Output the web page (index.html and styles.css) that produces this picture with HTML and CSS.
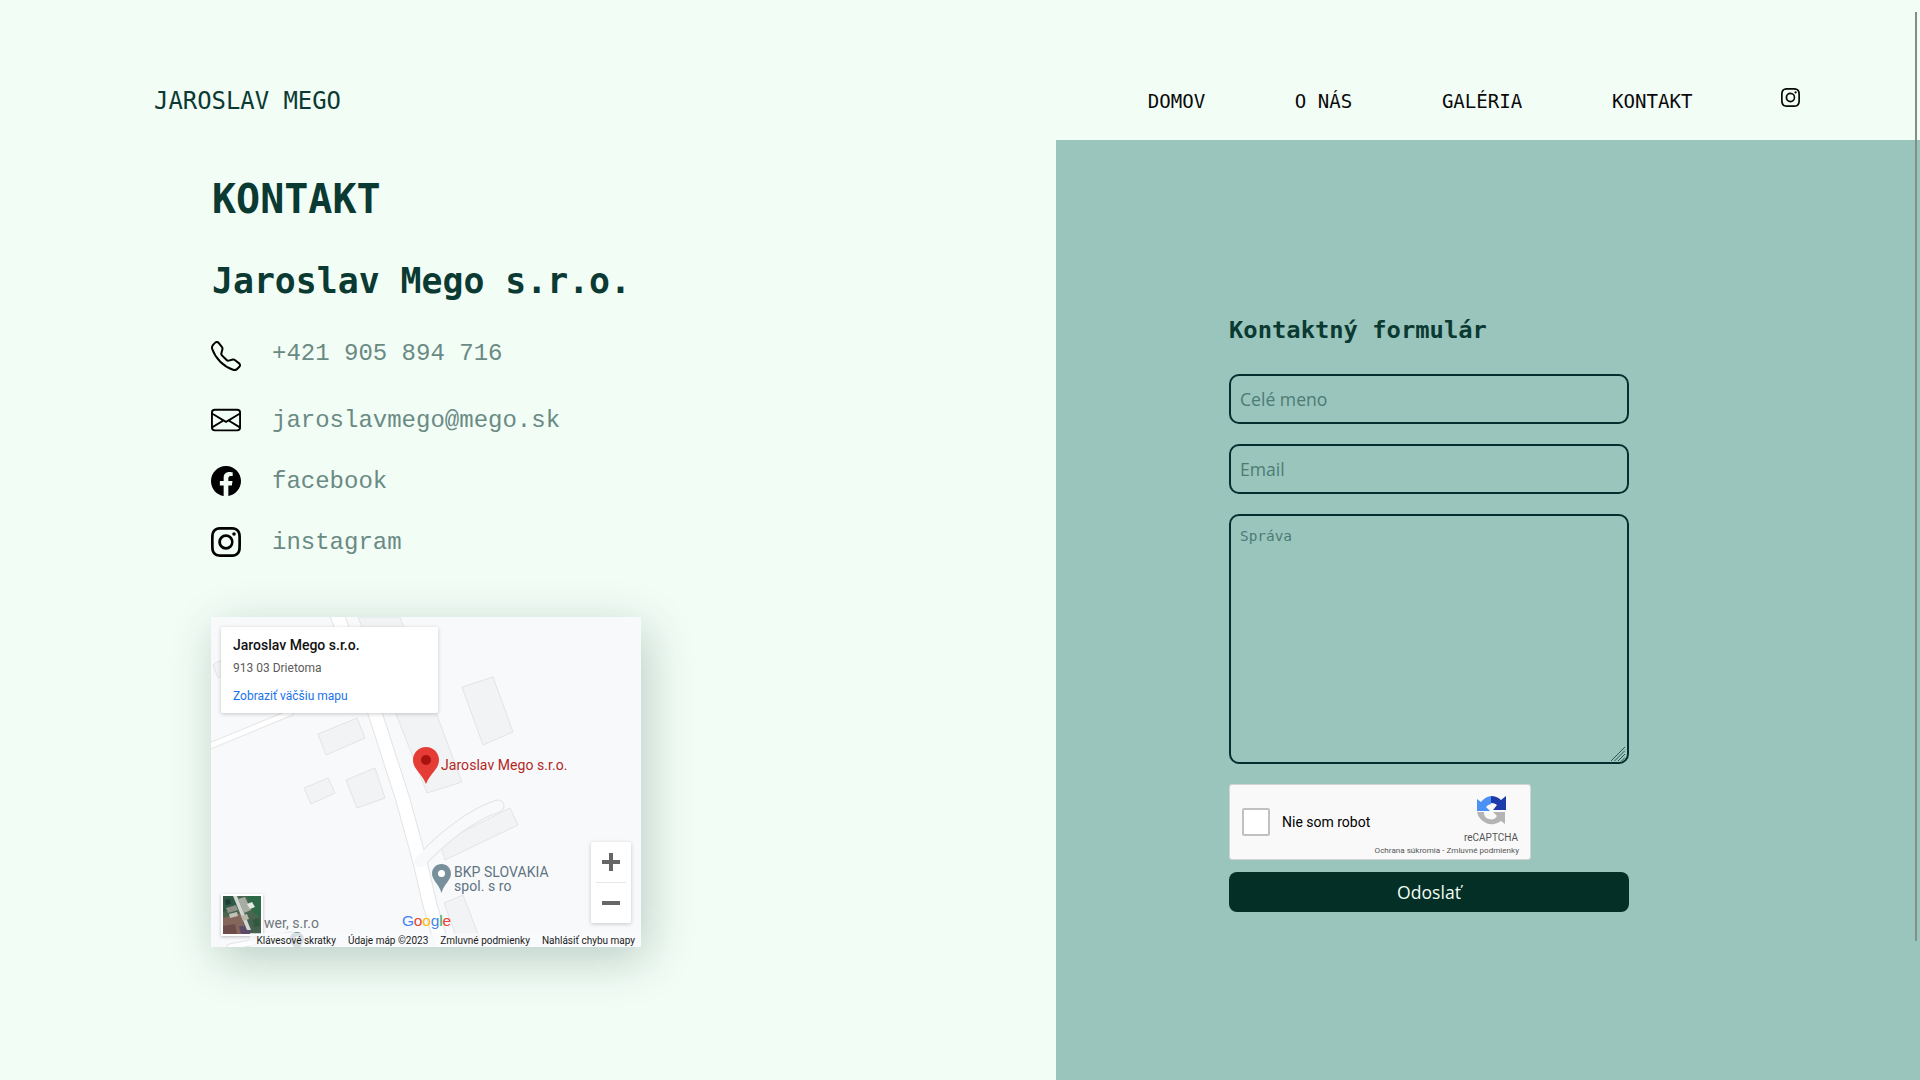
FILE: index.html
```html
<!DOCTYPE html>
<html lang="sk">
<head>
<meta charset="utf-8">
<title>Kontakt – Jaroslav Mego</title>
<link rel="stylesheet" href="styles.css">
</head>
<body>
<div class="page">
  <header class="header">
    <a class="logo">JAROSLAV MEGO</a>
    <nav class="nav">
      <a>DOMOV</a>
      <a>O NÁS</a>
      <a>GALÉRIA</a>
      <a>KONTAKT</a>
      <svg class="nav-icon" viewBox="0 0 16 16"><path d="M8 0C5.829 0 5.556.01 4.703.048 3.85.088 3.269.222 2.76.42a3.917 3.917 0 0 0-1.417.923A3.927 3.927 0 0 0 .42 2.76C.222 3.268.087 3.85.048 4.7.01 5.555 0 5.827 0 8.001c0 2.172.01 2.444.048 3.297.04.852.174 1.433.372 1.942.205.526.478.972.923 1.417.444.445.89.719 1.416.923.51.198 1.09.333 1.942.372C5.555 15.99 5.827 16 8 16s2.444-.01 3.298-.048c.851-.04 1.434-.174 1.943-.372a3.916 3.916 0 0 0 1.416-.923c.445-.445.718-.891.923-1.417.197-.509.332-1.09.372-1.942C15.99 10.445 16 10.173 16 8s-.01-2.445-.048-3.299c-.04-.851-.175-1.433-.372-1.941a3.926 3.926 0 0 0-.923-1.417A3.911 3.911 0 0 0 13.24.42c-.51-.198-1.092-.333-1.943-.372C10.443.01 10.172 0 7.998 0h.003zm-.717 1.442h.718c2.136 0 2.389.007 3.232.046.78.035 1.204.166 1.486.275.373.145.64.319.92.599.28.28.453.546.598.92.11.281.24.705.275 1.485.039.843.047 1.096.047 3.231s-.008 2.389-.047 3.232c-.035.78-.166 1.203-.275 1.485a2.47 2.47 0 0 1-.599.919c-.28.28-.546.453-.92.598-.28.11-.704.24-1.485.276-.843.038-1.096.047-3.232.047s-2.39-.009-3.233-.047c-.78-.036-1.203-.166-1.485-.276a2.478 2.478 0 0 1-.92-.598 2.48 2.48 0 0 1-.6-.92c-.109-.281-.24-.705-.275-1.485-.038-.843-.046-1.096-.046-3.233 0-2.136.008-2.388.046-3.231.036-.78.166-1.204.276-1.486.145-.373.319-.64.599-.92.28-.28.546-.453.92-.598.282-.11.705-.24 1.485-.276.738-.034 1.024-.044 2.515-.045v.002zm4.988 1.328a.96.96 0 1 0 0 1.92.96.96 0 0 0 0-1.92zm-4.27 1.122a4.109 4.109 0 1 0 0 8.217 4.109 4.109 0 0 0 0-8.217zm0 1.441a2.667 2.667 0 1 1 0 5.334 2.667 2.667 0 0 1 0-5.334z"/></svg>
    </nav>
  </header>

  <main class="main">
    <section class="info">
      <h1 class="info-title">KONTAKT</h1>
      <h2 class="info-company">Jaroslav Mego s.r.o.</h2>
      <ul class="contacts">
        <li class="contact contact-phone">
          <svg class="contact-icon" viewBox="0 0 16 16"><path d="M3.654 1.328a.678.678 0 0 0-1.015-.063L1.605 2.3c-.483.484-.661 1.169-.45 1.77a17.568 17.568 0 0 0 4.168 6.608 17.569 17.569 0 0 0 6.608 4.168c.601.211 1.286.033 1.77-.45l1.034-1.034a.678.678 0 0 0-.063-1.015l-2.307-1.794a.678.678 0 0 0-.58-.122l-2.19.547a1.745 1.745 0 0 1-1.657-.459L5.482 8.062a1.745 1.745 0 0 1-.46-1.657l.548-2.19a.678.678 0 0 0-.122-.58L3.654 1.328zM1.884.511a1.745 1.745 0 0 1 2.612.163L6.29 2.98c.329.423.445.974.315 1.494l-.547 2.19a.678.678 0 0 0 .178.643l2.457 2.457a.678.678 0 0 0 .644.178l2.189-.547a1.745 1.745 0 0 1 1.494.315l2.306 1.794c.829.645.905 1.87.163 2.611l-1.034 1.034c-.74.74-1.846 1.065-2.877.702a18.634 18.634 0 0 1-7.01-4.42 18.634 18.634 0 0 1-4.42-7.009c-.362-1.03-.037-2.137.703-2.877L1.885.511z"/></svg>
          <span class="contact-text">+421 905 894 716</span>
        </li>
        <li class="contact">
          <svg class="contact-icon" viewBox="0 0 16 16"><path d="M0 4a2 2 0 0 1 2-2h12a2 2 0 0 1 2 2v8a2 2 0 0 1-2 2H2a2 2 0 0 1-2-2V4Zm2-1a1 1 0 0 0-1 1v.217l7 4.2 7-4.2V4a1 1 0 0 0-1-1H2Zm13 2.383-4.708 2.825L15 11.105V5.383Zm-.034 6.876-5.64-3.471L8 9.583l-1.326-.795-5.64 3.47A1 1 0 0 0 2 13h12a1 1 0 0 0 .966-.741ZM1 11.105l4.708-2.897L1 5.383v5.722Z"/></svg>
          <span class="contact-text">jaroslavmego@mego.sk</span>
        </li>
        <li class="contact">
          <svg class="contact-icon" viewBox="0 0 16 16"><path d="M16 8.049c0-4.446-3.582-8.05-8-8.05C3.58 0-.002 3.603-.002 8.05c0 4.017 2.926 7.347 6.75 7.951v-5.625h-2.03V8.05H6.75V6.275c0-2.017 1.195-3.131 3.022-3.131.876 0 1.791.157 1.791.157v1.98h-1.009c-.993 0-1.303.621-1.303 1.258v1.51h2.218l-.354 2.326H9.25V16c3.824-.604 6.75-3.934 6.75-7.951z"/></svg>
          <span class="contact-text">facebook</span>
        </li>
        <li class="contact">
          <svg class="contact-icon" viewBox="0 0 16 16"><path d="M8 0C5.829 0 5.556.01 4.703.048 3.85.088 3.269.222 2.76.42a3.917 3.917 0 0 0-1.417.923A3.927 3.927 0 0 0 .42 2.76C.222 3.268.087 3.85.048 4.7.01 5.555 0 5.827 0 8.001c0 2.172.01 2.444.048 3.297.04.852.174 1.433.372 1.942.205.526.478.972.923 1.417.444.445.89.719 1.416.923.51.198 1.09.333 1.942.372C5.555 15.99 5.827 16 8 16s2.444-.01 3.298-.048c.851-.04 1.434-.174 1.943-.372a3.916 3.916 0 0 0 1.416-.923c.445-.445.718-.891.923-1.417.197-.509.332-1.09.372-1.942C15.99 10.445 16 10.173 16 8s-.01-2.445-.048-3.299c-.04-.851-.175-1.433-.372-1.941a3.926 3.926 0 0 0-.923-1.417A3.911 3.911 0 0 0 13.24.42c-.51-.198-1.092-.333-1.943-.372C10.443.01 10.172 0 7.998 0h.003zm-.717 1.442h.718c2.136 0 2.389.007 3.232.046.78.035 1.204.166 1.486.275.373.145.64.319.92.599.28.28.453.546.598.92.11.281.24.705.275 1.485.039.843.047 1.096.047 3.231s-.008 2.389-.047 3.232c-.035.78-.166 1.203-.275 1.485a2.47 2.47 0 0 1-.599.919c-.28.28-.546.453-.92.598-.28.11-.704.24-1.485.276-.843.038-1.096.047-3.232.047s-2.39-.009-3.233-.047c-.78-.036-1.203-.166-1.485-.276a2.478 2.478 0 0 1-.92-.598 2.48 2.48 0 0 1-.6-.92c-.109-.281-.24-.705-.275-1.485-.038-.843-.046-1.096-.046-3.233 0-2.136.008-2.388.046-3.231.036-.78.166-1.204.276-1.486.145-.373.319-.64.599-.92.28-.28.546-.453.92-.598.282-.11.705-.24 1.485-.276.738-.034 1.024-.044 2.515-.045v.002zm4.988 1.328a.96.96 0 1 0 0 1.92.96.96 0 0 0 0-1.92zm-4.27 1.122a4.109 4.109 0 1 0 0 8.217 4.109 4.109 0 0 0 0-8.217zm0 1.441a2.667 2.667 0 1 1 0 5.334 2.667 2.667 0 0 1 0-5.334z"/></svg>
          <span class="contact-text">instagram</span>
        </li>
      </ul>

      <div class="map">
        <svg class="map-canvas" viewBox="211 617 430 330">
          <rect x="211" y="617" width="430" height="330" fill="#f8f9fb"/>
          <g fill="#f1f3f4" stroke="#e2e4e6" stroke-width="1">
            <polygon points="358,617 400,617 462,782 427,793"/>
            <polygon points="462,687 493,677 513,732 483,745"/>
            <polygon points="318,734 357,718 365,738 326,755"/>
            <polygon points="304,788 328,778 335,793 311,804"/>
            <polygon points="346,780 375,768 385,798 357,808"/>
            <polygon points="440,843 510,808 518,825 445,860"/>
            <polygon points="444,903 463,895 483,947 460,947"/>
            <polygon points="213,665 220,660 225,672 218,678"/>
          </g>
          <g fill="none" stroke-linecap="round" stroke-linejoin="round">
            <path d="M335,610 L375,713 L403,800 L420,862 L430,905 L445,955" stroke="#e2e4e6" stroke-width="15"/>
            <path d="M420,862 C440,840 470,815 498,806" stroke="#e2e4e6" stroke-width="13"/>
            <path d="M205,748 L290,713" stroke="#e2e4e6" stroke-width="7"/>
            <path d="M230,947 L290,935" stroke="#e2e4e6" stroke-width="7"/>
            <path d="M335,610 L375,713 L403,800 L420,862 L430,905 L445,955" stroke="#ffffff" stroke-width="13"/>
            <path d="M420,862 C440,840 470,815 498,806" stroke="#f8f9fb" stroke-width="11"/>
            <path d="M205,748 L290,713" stroke="#ffffff" stroke-width="5"/>
            <path d="M230,947 L290,935" stroke="#ffffff" stroke-width="5"/>
          </g>
          <path d="M426,747c-7.2,0-13,5.800-13,13c0,9.500,9,13,13,24c4,-11,13,-14.500,13,-24c0,-7.200,-5.800,-13,-13,-13z" fill="#e53c35"/>
          <circle cx="426" cy="760" r="5" fill="#a8130f"/>
          <path d="M441.500,864c-5.300,0-9.500,4.200-9.500,9.500c0,7,6.500,9.500,9.500,19.500c3,-10,9.500,-12.500,9.500,-19.500c0,-5.300,-4.200,-9.500,-9.500,-9.500z" fill="#78909c"/>
          <circle cx="441.500" cy="873.500" r="3.500" fill="#fff"/>
          <path d="M297,932c-4,0-7,3-7,7c0,3,2,5,4,8h6c2,-3,4,-5,4,-8c0,-4,-3,-7,-7,-7z" fill="#78909c"/>
          <circle cx="297" cy="939" r="2.500" fill="#fff"/>
        </svg>

        <span class="map-label map-label-red">Jaroslav Mego s.r.o.</span>
        <span class="map-label map-label-bkp">BKP SLOVAKIA<br>spol. s ro</span>
        <span class="map-label map-label-wer">wer, s.r.o</span>

        <div class="map-card">
          <div class="map-card-title">Jaroslav Mego s.r.o.</div>
          <div class="map-card-address">913 03 Drietoma</div>
          <a class="map-card-link">Zobraziť väčšiu mapu</a>
        </div>

        <div class="map-thumb">
          <svg viewBox="0 0 38 38" preserveAspectRatio="none">
            <rect width="38" height="38" fill="#4a6650"/>
            <polygon points="0,0 12,0 16,12 0,16" fill="#2f5846"/>
            <polygon points="24,0 38,0 38,22 30,16" fill="#2f6a48"/>
            <polygon points="0,22 18,17 24,38 0,38" fill="#85665a"/>
            <polygon points="0,30 12,28 14,38 0,38" fill="#6c4d4a"/>
            <polygon points="20,26 38,20 38,38 26,38" fill="#46604f"/>
            <polygon points="16,30 26,30 28,38 18,38" fill="#5d4a68"/>
            <polygon points="10,0 14,0 28,34 24,34" fill="#d3d6d1"/>
            <polygon points="15,3 22,1 28,14 21,17" fill="#a8ada4"/>
            <polygon points="24,8 29,6 32,11 27,13" fill="#e6e8e4"/>
            <polygon points="3,12 13,9 15,14 5,17" fill="#8f9189"/>
            <polygon points="6,18 14,16 15,20 7,22" fill="#c2c1b9"/>
            <polygon points="18,20 24,18 26,23 20,25" fill="#b9b6ab"/>
            <polygon points="2,4 7,3 8,8 3,9" fill="#1f3d33"/>
            <polygon points="30,24 36,22 37,30 31,31" fill="#2f5a3f"/>
          </svg>
        </div>

        <div class="map-google"><span class="g-blue">G</span><span class="g-red">o</span><span class="g-yellow">o</span><span class="g-blue">g</span><span class="g-green">l</span><span class="g-red">e</span></div>

        <div class="map-zoom">
          <div class="map-zoom-btn">
            <svg viewBox="0 0 18 18" class="map-zoom-icon"><path d="M0 7h7V0h4v7h7v4h-7v7H7v-7H0z"/></svg>
          </div>
          <div class="map-zoom-sep"></div>
          <div class="map-zoom-btn">
            <svg viewBox="0 0 18 18" class="map-zoom-icon"><path d="M0 7h18v4H0z"/></svg>
          </div>
        </div>

        <div class="map-attrib">
          <span>Klávesové skratky</span>
          <span>Údaje máp ©2023</span>
          <span>Zmluvné podmienky</span>
          <span>Nahlásiť chybu mapy</span>
        </div>
      </div>
    </section>

    <section class="panel">
      <form class="form">
        <h3 class="form-title">Kontaktný formulár</h3>
        <input class="field" type="text" placeholder="Celé meno">
        <input class="field" type="email" placeholder="Email">
        <div class="area-wrap">
          <textarea class="field field-area" placeholder="Správa"></textarea>
          <svg class="area-grip" viewBox="0 0 14 14"><path d="M0 14 14 0M3.500 14 14 3.500M7 14 14 7M10.500 14 14 10.500" fill="none" stroke="#2c5850" stroke-width="1"/></svg>
        </div>
        <div class="captcha">
          <span class="captcha-box"></span>
          <span class="captcha-text">Nie som robot</span>
          <div class="captcha-brand">
            <svg class="captcha-logo" viewBox="0 0 30 32">
              <path d="M1 17H8A7 7 0 0 0 21 21L17 17H29V29L25 26A15 15 0 0 1 1 17Z" fill="#b4b4b4"/>
              <path d="M15 1V9A7 7 0 0 0 10 12L14 16H1V4L5 7A15 15 0 0 1 15 1Z" fill="#4a90f5"/>
              <path d="M15 1A15 15 0 0 1 25 5L30 1V15H17L21 10A8 8 0 0 0 15 8Z" fill="#1c3aa9"/>
            </svg>
            <span class="captcha-name">reCAPTCHA</span>
            <span class="captcha-links">Ochrana súkromia - Zmluvné podmienky</span>
          </div>
        </div>
        <button class="submit" type="button">Odoslať</button>
      </form>
    </section>
  </main>
  <div class="scroll-thumb"></div>
</div>
</body>
</html>
```

FILE: styles.css
```css
* { box-sizing: border-box; }
html, body { margin: 0; padding: 0; height: 100%; overflow: hidden; }
body { background: #f2fdf6; color: #0b3a33; font-family: "DejaVu Sans Mono", monospace; }
.page { position: relative; width: 1920px; height: 1080px; display: flex; flex-direction: column; }

.header { height: 140px; padding: 62px 120px 0 154px; display: flex; align-items: center; justify-content: space-between; flex: none; }
.logo { font-family: "DejaVu Sans Mono", monospace; font-size: 23.9px; color: #0b3a33; }
.nav { display: flex; align-items: center; gap: 89.6px; font-family: "DejaVu Sans Mono", monospace; font-size: 19.1px; color: #0a0a0a; }
.nav-icon { width: 19px; height: 19px; fill: #0a0a0a; margin: -7px 0 0 -1px; }

.main { flex: 1; display: grid; grid-template-columns: 1056px 864px; min-height: 0; }
.info { padding: 35px 0 0 211px; }
.info-title { margin: 0 0 0 1px; font-size: 40px; line-height: 48px; font-weight: 700; letter-spacing: 0; }
.info-company { margin: 36px 0 0 1px; font-size: 34.8px; line-height: 44px; font-weight: 700; }

.contacts { list-style: none; margin: 38px 0 0; padding: 0; display: flex; flex-direction: column; gap: 31px; }
.contact { display: flex; align-items: center; gap: 31px; height: 30px; }
.contact-phone { margin-bottom: 3px; }
.contact-phone .contact-text { position: relative; top: -3px; }
.contact-icon { width: 30px; height: 30px; fill: #000; flex: none; }
.contact-text { font-family: "Liberation Mono", monospace; font-size: 24px; color: #6a8a84; }

.map { position: relative; width: 430px; height: 330px; margin-top: 60px; box-shadow: 6px 12px 44px rgba(11, 58, 51, .24); font-family: Roboto, sans-serif; background: #f8f9fb; }
.map-canvas { display: block; width: 430px; height: 330px; }
.map-label { position: absolute; font-size: 14px; line-height: 14px; white-space: nowrap; letter-spacing: .05px; }
.map-label-red { left: 230px; top: 141px; color: #b3261e; }
.map-label-bkp { left: 243px; top: 248px; color: #5f7380; }
.map-label-wer { left: 53px; top: 299px; color: #70757a; }
.map-card { position: absolute; left: 10px; top: 10px; width: 217px; height: 86px; background: #fff; box-shadow: 0 1px 4px rgba(0,0,0,.2); padding: 9px 12px; border-radius: 2px; }
.map-card-title { font-size: 14px; line-height: 18px; font-weight: 500; color: #111; }
.map-card-address { font-size: 12px; line-height: 16px; margin-top: 6px; color: #5b5b5b; }
.map-card-link { display: block; font-size: 12px; line-height: 16px; margin-top: 12px; color: #1a73e8; }
.map-thumb { position: absolute; left: 10px; top: 277px; width: 42px; height: 42px; border: 2px solid #fff; box-shadow: 0 1px 3px rgba(0,0,0,.25); background: #5a7355; }
.map-thumb svg { display: block; width: 100%; height: 100%; }
.map-google { position: absolute; left: 191px; top: 295px; font-family: "Liberation Sans", sans-serif; font-size: 15.5px; line-height: 18px; letter-spacing: -.2px; }
.g-blue { color: #4285f4; } .g-red { color: #ea4335; } .g-yellow { color: #fbbc05; } .g-green { color: #34a853; }
.map-zoom { position: absolute; left: 380px; top: 225px; width: 40px; height: 81px; background: #fff; box-shadow: 0 1px 4px rgba(0,0,0,.2); border-radius: 2px; display: flex; flex-direction: column; align-items: center; }
.map-zoom-btn { height: 40px; width: 100%; display: flex; align-items: center; justify-content: center; }
.map-zoom-icon { width: 18px; height: 18px; fill: #666; }
.map-zoom-sep { width: 30px; height: 1px; flex: none; background: #e6e6e6; }
.map-attrib { position: absolute; right: 0; bottom: 0; height: 14px; padding: 0 6px 0 6px; display: flex; gap: 12px; align-items: center; font-size: 10px; color: #1b1b1b; white-space: nowrap; background: rgba(248,249,251,.75); }

.panel { background: #99c5bd; padding: 175px 0 0 173px; }
.form { width: 400px; margin-top: -1px; display: flex; flex-direction: column; gap: 20px; }
.form-title { margin: 1px 0 9px; font-size: 23.8px; line-height: 30px; font-weight: 700; color: #0b3a33; }
.field { display: block; width: 400px; height: 50px; border: 2px solid #042f2e; border-radius: 10px; background: transparent; padding: 0 9px; font-family: "Open Sans", sans-serif; font-size: 17.6px; color: #042f2e; outline: none; }
.field::placeholder { color: #4d7b74; opacity: 1; }
.area-wrap { position: relative; height: 250px; }
.field-area { height: 250px; padding: 12px 9px; font-family: "DejaVu Sans Mono", monospace; font-size: 14.4px; resize: none; }
.area-grip { position: absolute; right: 4px; bottom: 3px; width: 14px; height: 14px; }
.captcha { position: relative; width: 302px; height: 76px; background: #f9f9f9; border: 1px solid #d3d3d3; border-radius: 3px; font-family: Roboto, sans-serif; display: flex; align-items: center; }
.captcha-box { width: 28px; height: 28px; margin-left: 12px; background: #fff; border: 2px solid #c1c1c1; border-radius: 2px; flex: none; }
.captcha-text { margin-left: 12px; font-size: 14px; color: #000; }
.captcha-brand { position: absolute; right: 0; top: 0; bottom: 0; width: 160px; }
.captcha-logo { position: absolute; right: 24px; top: 10px; width: 30px; height: 32px; }
.captcha-name { position: absolute; right: 12px; top: 47px; font-size: 10px; line-height: 12px; color: #555; }
.captcha-links { position: absolute; right: 11px; top: 59px; font-size: 8.1px; line-height: 12px; color: #555; white-space: nowrap; }
.submit { width: 400px; height: 40px; margin-top: -8px; background: #042f26; color: #f0fdf4; border: 0; border-radius: 8px; font-family: "Open Sans", sans-serif; font-size: 17.6px; padding: 0; }
.scroll-thumb { position: absolute; left: 1915px; top: 12px; width: 2px; height: 929px; background: #7f9088; }
```
